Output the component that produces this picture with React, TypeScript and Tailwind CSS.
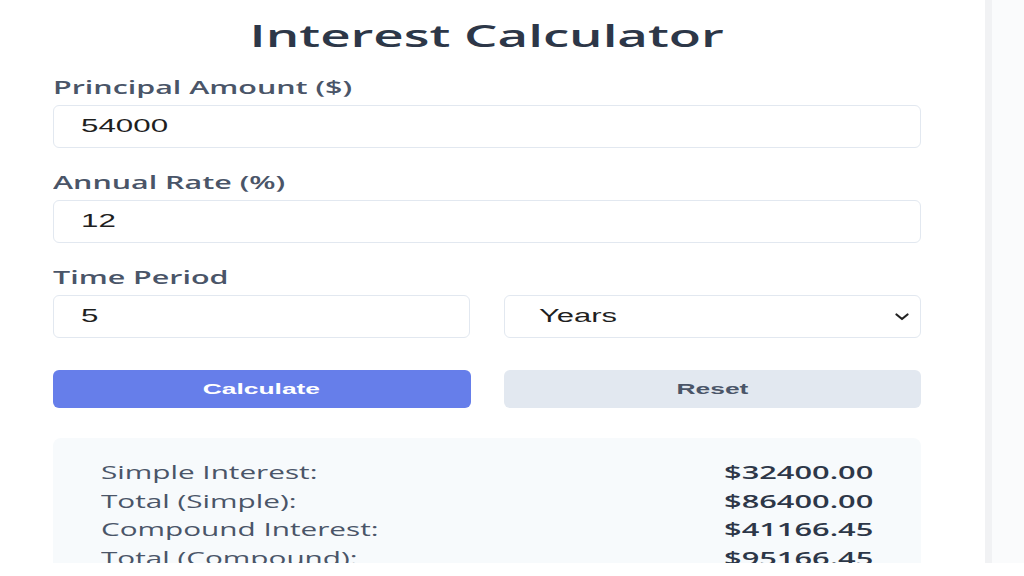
import React from "react";

const sans = { fontFamily: '"Open Sans", "Noto Sans", sans-serif' };
const arial = { fontFamily: '"Liberation Sans", Arial, sans-serif' };

function Label({ children }: { children: React.ReactNode }) {
  return (
    <div className="mb-[6px] text-[18px] leading-[24px] font-semibold text-[#4a5568] whitespace-nowrap" style={sans}>
      <span className="inline-block origin-left scale-x-[1.69]">{children}</span>
    </div>
  );
}

function Field({ value }: { value: string }) {
  return (
    <div className="flex h-[43px] items-center rounded-[6px] border border-[#e2e8f0] bg-white pl-[27px] text-[18px] text-[#1f1f1f]" style={arial}>
      <span className="inline-block origin-left scale-x-[1.74]">{value}</span>
    </div>
  );
}

const rows = [
  ["Simple Interest:", "$32400.00"],
  ["Total (Simple):", "$86400.00"],
  ["Compound Interest:", "$41166.45"],
  ["Total (Compound):", "$95166.45"],
];

export default function App() {
  return (
    <div className="bg-white">
      <div className="flex h-[563px] overflow-hidden bg-[#fafbfc]">
        <div className="w-[985px] shrink-0 bg-white">
          <div className="ml-[53px] w-[868px]">
            <h1 className="pt-[18px] text-center text-[30px] leading-[36px] font-semibold text-[#2d3748] whitespace-nowrap" style={sans}>
              <span className="inline-block origin-center scale-x-[1.76]">Interest Calculator</span>
            </h1>

            <div className="mt-[21px]">
              <Label>Principal Amount ($)</Label>
              <Field value="54000" />
            </div>

            <div className="mt-[22px]">
              <Label>Annual Rate (%)</Label>
              <Field value="12" />
            </div>

            <div className="mt-[22px]">
              <Label>Time Period</Label>
              <div className="grid grid-cols-2 gap-[34px]">
                <Field value="5" />
                <div className="flex h-[43px] items-center justify-between rounded-[6px] border border-[#e2e8f0] bg-white pl-[34px] pr-[11px] text-[18px] text-[#1f1f1f]" style={arial}>
                  <span className="inline-block origin-left scale-x-[1.72]">Years</span>
                  <svg width="14" height="8" viewBox="0 0 14 8" fill="none">
                    <path d="M1.5 1.5 L7 6 L12.5 1.5" stroke="#222" strokeWidth="2.2" strokeLinecap="round" strokeLinejoin="round" />
                  </svg>
                </div>
              </div>
            </div>

            <div className="mt-[32px] grid grid-cols-2 gap-[33px]">
              <button className="flex h-[38px] items-center justify-center rounded-[6px] bg-[#667eea] text-[15px] font-bold text-white" style={arial}>
                <span className="inline-block origin-center scale-x-[1.76]">Calculate</span>
              </button>
              <button className="flex h-[38px] items-center justify-center rounded-[6px] bg-[#e2e8f0] text-[15px] font-bold text-[#4a5568]" style={arial}>
                <span className="inline-block origin-center scale-x-[1.76]">Reset</span>
              </button>
            </div>

            <div className="mt-[30px] rounded-[8px] bg-[#f7fafc] px-[48px] pt-[20px] pb-[20px]" style={sans}>
              {rows.map(([k, v]) => (
                <div key={k} className="flex justify-between text-[18px] leading-[28.5px] whitespace-nowrap">
                  <span className="inline-block origin-left scale-x-[1.65] text-[#4a5568]">{k}</span>
                  <span className="inline-block origin-right scale-x-[1.71] font-semibold text-[#2d3748]">{v}</span>
                </div>
              ))}
            </div>
          </div>
        </div>
        <div className="w-[7px] shrink-0 bg-[#f1f2f4]" />
      </div>
    </div>
  );
}
